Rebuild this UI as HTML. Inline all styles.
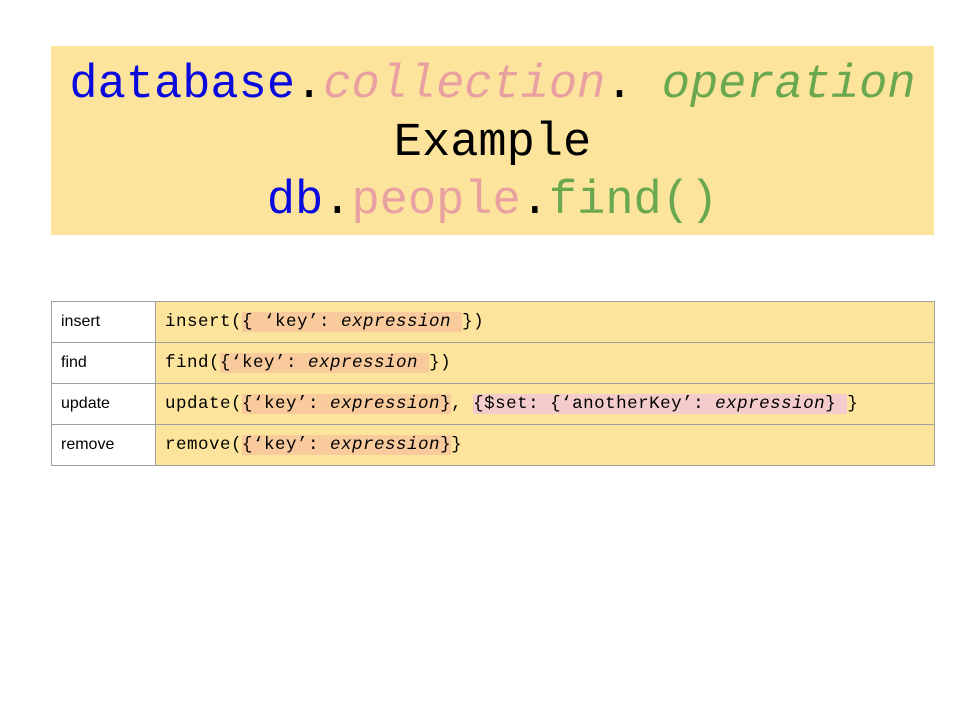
<!DOCTYPE html>
<html><head><meta charset="utf-8"><style>
body{margin:0;width:960px;height:720px;background:#fff;position:relative;overflow:hidden}
.title{position:absolute;left:51px;top:46px;width:883px;height:189px;background:#fde49c;box-sizing:border-box;padding-top:11px;text-align:center;font-family:"Liberation Mono",monospace;font-size:47px;line-height:58px;color:#000;white-space:nowrap}
.b{color:#0a0adf}.p{color:#e8a0a0}.g{color:#6aa84f}
table{position:absolute;left:51px;top:301px;width:884px;border-collapse:collapse}
td{border:1px solid #a0a0a0;height:41px;padding:0 0 0 9px;box-sizing:border-box}
td.l{width:104px;font-family:"Liberation Sans",sans-serif;font-size:16px;background:#fff}
td.c{background:#fde49c;font-family:"Liberation Mono",monospace;font-size:17.5px;letter-spacing:0.5px;white-space:nowrap}
.o{background:#f9cb9c}.k{background:#f4cccc}
</style></head><body>
<div class="title"><span class="b">database</span>.<i class="p">collection</i>. <i class="g">operation</i><br>Example<br><span class="b">db</span>.<span class="p">people</span>.<span class="g">find()</span></div>
<table>
<tr><td class="l">insert</td><td class="c">insert(<span class="o">{ ‘key’: <i>expression</i> </span>})</td></tr>
<tr><td class="l">find</td><td class="c">find(<span class="o">{‘key’: <i>expression</i> </span>})</td></tr>
<tr><td class="l">update</td><td class="c">update(<span class="o">{‘key’: <i>expression</i>}</span>, <span class="k">{$set: {‘anotherKey’: <i>expression</i>} </span>}</td></tr>
<tr><td class="l">remove</td><td class="c">remove(<span class="o">{‘key’: <i>expression</i>}</span>}</td></tr>
</table>
</body></html>
